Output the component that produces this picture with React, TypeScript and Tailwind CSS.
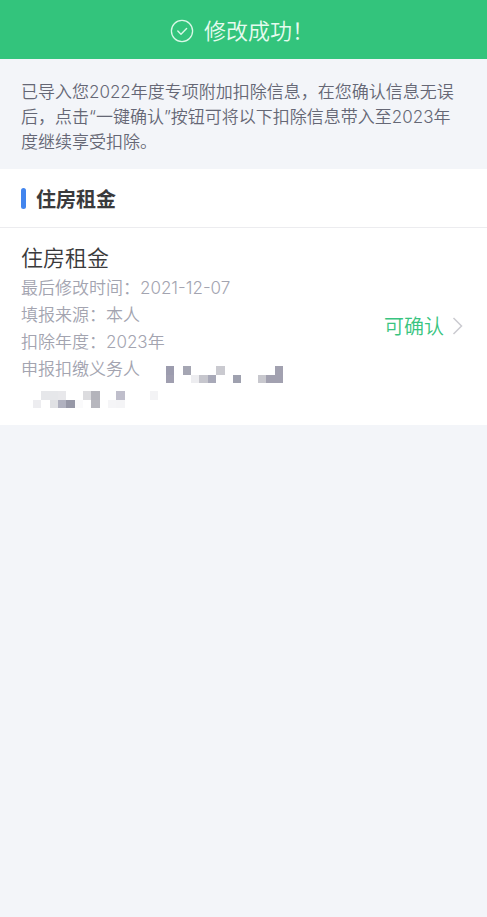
import React from "react";

type Cell = [col: number, row: number, fill: string];

const nameCells: Cell[] = [
  [0, 0, "#9c9cae"], [0, 1, "#a09fb0"], [2, 0, "#a5a6b3"], [3, 1, "#ededf0"],
  [4, 1, "#c6c6cd"], [5, 1, "#a8a9b8"], [6, 0, "#cacad0"], [8, 1, "#9fa1af"],
  [11, 1, "#c8c8ce"], [12, 1, "#a2a1b0"], [13, 0, "#a2a1b0"], [13, 1, "#a2a1b0"],
];

const restCells: Cell[] = [
  [0, 1, "#ededf0"], [1, 0, "#e6e7ea"], [2, 0, "#e6e7ea"], [3, 0, "#e8e8eb"],
  [2, 1, "#e0e1e4"], [3, 1, "#b0b1bf"], [4, 1, "#9697a6"], [5, 1, "#fafafb"],
  [6, 0, "#dcdcdf"], [7, 0, "#b4b4bb"], [7, 1, "#b7b7be"], [9, 1, "#f5f5f7"],
  [10, 0, "#bfbecb"], [10, 1, "#f4f4f6"], [14, 0, "#f3f3f5"],
];

function Mosaic({ cells, cols, className }: { cells: Cell[]; cols: number; className: string }) {
  return (
    <svg
      className={className}
      viewBox={`0 0 ${cols} 2`}
      preserveAspectRatio="none"
      shapeRendering="crispEdges"
      aria-hidden="true"
    >
      {cells.map(([x, y, fill]) => (
        <rect key={`${x}-${y}`} x={x} y={y} width="1" height="1" fill={fill} />
      ))}
    </svg>
  );
}

const details = ["最后修改时间：2021-12-07", "填报来源：本人", "扣除年度：2023年"];

export default function App() {
  return (
    <div className="min-h-screen bg-[#f3f5f9] font-['Inter','Noto_Sans_CJK_SC',sans-serif] font-[350]" lang="zh-CN">
      <header className="flex h-[59px] items-center justify-center gap-[10px] bg-[#33c47c] pt-[2px] pr-[3px] text-white" role="status">
        <svg className="size-6" viewBox="0 0 24 24" fill="none" stroke="#d9f8e7" strokeLinecap="round" strokeLinejoin="round" aria-hidden="true">
          <circle cx="12" cy="12" r="10.6" strokeWidth="1.3" />
          <path d="M7.8 12l3.2 3.2 5.6-5.6" strokeWidth="1.4" />
        </svg>
        <span className="text-[22px] leading-[30px] text-[#e6fbef]">修改成功！</span>
      </header>

      <p className="px-[21px] pt-[21px] pb-[14px] text-[17px] leading-[25px] text-[#656775]">
        已导入您2022年度专项附加扣除信息，在您确认信息无误后，点击“一键确认”按钮可将以下扣除信息带入至2023年度继续享受扣除。
      </p>

      <main className="bg-white">
        <div className="flex h-[59px] items-center gap-[10px] border-b border-[#ececef] px-[21px]">
          <span className="h-[21px] w-[5px] rounded-full bg-[#4285ee]" />
          <h2 className="pt-[3px] text-[20px] leading-[30px] font-bold text-[#3a3a3c]">住房租金</h2>
        </div>

        <section className="flex items-center justify-between pt-[15px] pr-6 pb-[17px] pl-[21px]">
          <div className="text-[17px] leading-[27px] text-[#a3a4b0]">
            <h3 className="pb-[2px] text-[22px] leading-[30px] text-[#3a3a3c]">住房租金</h3>
            {details.map((line) => (
              <p key={line}>{line}</p>
            ))}
            <div className="flex h-[27px] items-start gap-[26px]">
              <span>申报扣缴义务人</span>
              <Mosaic cells={nameCells} cols={14} className="h-[17px] w-[117px] self-end" />
            </div>
            <Mosaic cells={restCells} cols={15} className="mt-2 ml-3 h-[17px] w-[125px]" />
          </div>
          <a href="#confirm" className="flex items-center gap-[8px] text-[20px] leading-[30px] text-[#38c480]">
            <span className="pt-[2px]">可确认</span>
            <svg className="h-[18px] w-[11px]" viewBox="0 0 11 18" fill="none" stroke="#cbcbd0" strokeWidth="1.5" aria-hidden="true">
              <path d="M1.5 1l8 8-8 8" />
            </svg>
          </a>
        </section>
      </main>
    </div>
  );
}
